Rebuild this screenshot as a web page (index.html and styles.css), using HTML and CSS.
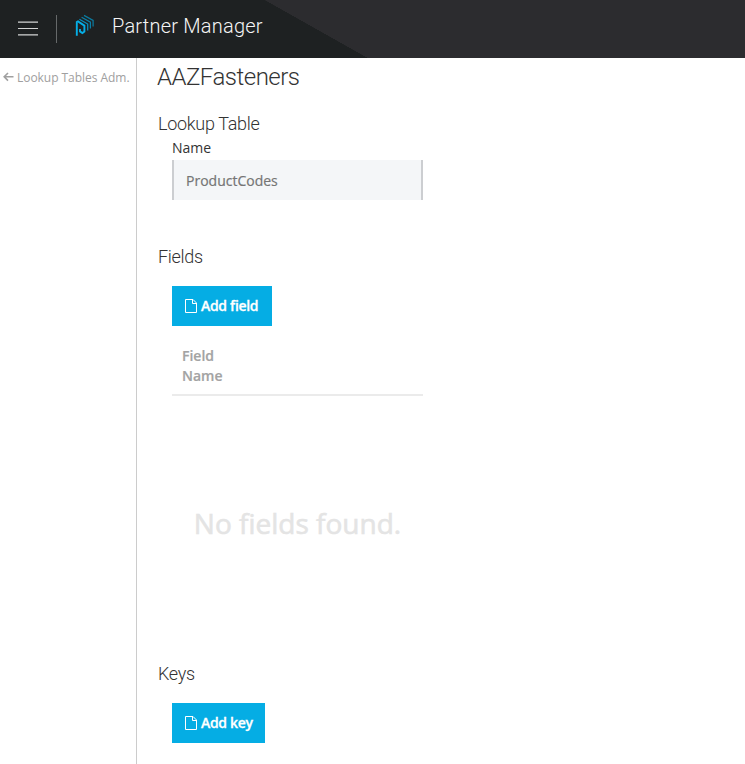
FILE: index.html
```html
<!DOCTYPE html>
<html lang="en">
<head>
<meta charset="utf-8">
<title>Partner Manager</title>
<link rel="stylesheet" href="styles.css">
</head>
<body>
<header class="topbar">
  <svg class="menu" width="20" height="16" viewBox="0 0 20 16"><path d="M0 1.2h20M0 7.5h20M0 13.8h20"/></svg>
  <span class="divider"></span>
  <svg class="logo" width="20" height="24" viewBox="0 0 20 24">
    <path class="l1" d="M1.8 21.8V8L3 7.4L9.4 11.6V17.6L7.4 19L5 17.4V15"/>
    <path class="l2" d="M4.4 5.2L12.7 10V16.6"/>
    <path class="l3" d="M6.6 3.2L15.4 8.2V14.6"/>
    <path class="l4" d="M9 1.4L18.1 6.4V12.4"/>
  </svg>
  <span class="brand">Partner Manager</span>
</header>
<div class="layout">
  <aside class="sidebar">
    <a class="back"><svg width="11" height="10" viewBox="0 0 11 10"><path d="M10.5 4.8H1.2M5 1L1.2 4.8L5 8.6"/></svg><span>Lookup Tables Adm.</span></a>
  </aside>
  <main class="content">
    <h1>AAZFasteners</h1>
    <section class="lookup">
      <h2>Lookup Table</h2>
      <div class="body">
        <label for="name">Name</label>
        <input id="name" value="ProductCodes" readonly>
      </div>
    </section>
    <section class="fields">
      <h2>Fields</h2>
      <div class="body">
        <button class="btn"><svg width="12" height="14" viewBox="0 0 12 14"><path d="M.5 .5H8L11.5 4V13.5H.5ZM7.5 .5V4.5H11.5"/></svg><span>Add field</span></button>
        <div class="thead"><span>Field Name</span></div>
        <div class="empty">No fields found.</div>
      </div>
    </section>
    <section class="keys">
      <h2>Keys</h2>
      <div class="body">
        <button class="btn key"><svg width="12" height="14" viewBox="0 0 12 14"><path d="M.5 .5H8L11.5 4V13.5H.5ZM7.5 .5V4.5H11.5"/></svg><span>Add key</span></button>
      </div>
    </section>
  </main>
</div>
</body>
</html>
```
FILE: styles.css
```css
* { box-sizing: border-box; }
body { margin: 0; height: 764px; overflow: hidden; background: #fff; color: #333; font: 14px/20px "Open Sans", sans-serif; }
svg { fill: none; flex: none; }
.topbar { height: 58px; display: flex; align-items: flex-start; background: #1e2122; background: linear-gradient(to bottom left, #2c2c2f 50%, #1e2122 50.3%) 265px 0 / 103px 58px no-repeat, linear-gradient(to right, #1e2122 266px, #2c2c2f 266px); }
.menu { margin: 21px 0 0 18px; stroke: #d2d3d3; stroke-width: 1.2; }
.divider { width: 1px; height: 28px; margin: 15px 0 0 18px; background: #66696a; }
.logo { margin: 14px 0 0 18px; stroke-width: 1.25; }
.l1 { stroke: #05aee6; stroke-width: 1.9; }
.l2 { stroke: #0890bd; }
.l3 { stroke: #0b7fa6; }
.l4 { stroke: #0b7a9f; }
.brand { margin: 12px 0 0 17px; font: 300 20px/28px Roboto, sans-serif; letter-spacing: .22px; color: #f5f5f5; white-space: nowrap; }
.layout { display: flex; height: 706px; }
.sidebar { width: 137px; border-right: 1px solid #ccc; }
.back { display: flex; padding: 9px 0 0 3px; color: #a0a0a0; font-size: 12px; white-space: nowrap; }
.back svg { margin: 5px 3px 0 0; stroke: #a0a0a0; stroke-width: 1.6; }
.back span { padding-top: 1px; letter-spacing: -.04px; }
.content { flex: 1; padding-left: 20px; }
h1, h2 { margin: 0; font-family: Roboto, sans-serif; font-weight: 300; white-space: nowrap; }
h1 { font-size: 24px; line-height: 38px; height: 54px; letter-spacing: -.5px; }
h2 { font-size: 18px; line-height: 26px; letter-spacing: -.3px; padding-left: 1px; }
.body { width: 266px; padding-left: 15px; }
.lookup { height: 132px; }
.lookup h2 { height: 26px; line-height: 24px; }
.fields { height: 417px; }
label { display: block; height: 22px; line-height: 20px; }
input { display: block; width: 251px; height: 40px; margin: 0; padding: 1px 12px 1px; border: 0; border-left: 2px solid #ccced1; border-right: 2px solid #ccced1; border-radius: 0; background: #f4f6f8; color: #757575; font: 14px "Open Sans", sans-serif; outline: 0; -webkit-text-stroke: .2px; }
.btn { display: flex; align-items: center; width: 100px; height: 40px; margin-top: 16px; padding: 0 0 0 13px; border: 0; background: #05ade4; color: #fff; font: 600 14px/20px "Open Sans", sans-serif; letter-spacing: -.3px; white-space: nowrap; -webkit-text-stroke: .3px; }
.btn svg { margin-right: 4px; stroke: #fff; }
.btn.key { width: 93px; }
.thead { height: 70px; padding: 20px 10px 0; border-bottom: 2px solid #ebebeb; color: #a3a3a3; font-weight: 600; -webkit-text-stroke: .2px; }
.thead span { display: block; width: 50px; }
.empty { height: 254px; line-height: 254px; text-align: center; font-size: 28px; color: #e4e4e4; white-space: nowrap; -webkit-text-stroke: .6px; }
```
